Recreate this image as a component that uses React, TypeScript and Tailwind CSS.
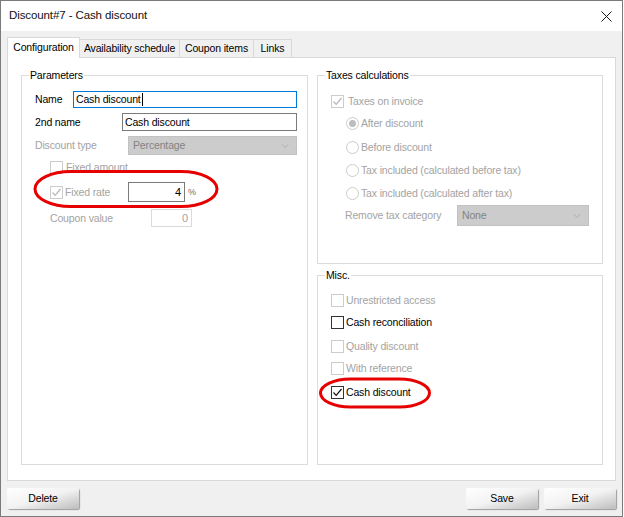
import { ChevronDown } from 'lucide-react';

const GRAY = 'text-[#a3a3a3]';

export default function App() {
  return (
    <div className="relative w-[623px] h-[517px] bg-[#f0f0f0] border border-[#7a7a7a] flex flex-col font-['Liberation_Sans',Arial,sans-serif] text-[10.5px] tracking-[-0.15px] text-black leading-none">
      {/* ── Title bar ─────────────────────────── */}
      <div className="h-[30px] shrink-0 bg-white flex items-center justify-between pl-[8px] pr-[9px]">
        <span className="text-[11.5px] tracking-[-0.1px] text-[#111]">Discount#7 - Cash discount</span>
        <svg width="11" height="11" viewBox="0 0 11 11" className="mr-[1px]">
          <path d="M0.5 0.5 L10.5 10.5 M10.5 0.5 L0.5 10.5" stroke="#1a1a1a" strokeWidth="1" fill="none" />
        </svg>
      </div>

      {/* ── Body ──────────────────────────────── */}
      <div className="flex flex-col px-[6px] pt-[6px]">
        {/* Tabs */}
        <div className="flex items-end h-[20px]">
          <div className="relative z-10 -mb-px h-[21px] w-[73px] bg-white border-x border-t border-[#d9d9d9] flex items-center justify-center pb-[1px]">
            Configuration
          </div>
          <Tab label="Availability schedule" w="w-[100px]" />
          <Tab label="Coupon items" w="w-[74px]" />
          <Tab label="Links" w="w-[38px]" />
        </div>

        {/* Panel */}
        <div className="h-[424px] bg-white border border-[#d9d9d9] pt-[17px] pl-[13px] pr-[9px]">
          <div className="grid grid-cols-[287px_286px] gap-x-[9px]">
            {/* Parameters */}
            <GroupBox label="Parameters" className="h-[390px] pt-[15px] pl-[13px] pr-[10px]">
              <div className="flex items-center h-[17px]">
                <span className="w-[38px]">Name</span>
                <div className="flex-1 h-full border border-[#0078d7] flex items-center pl-[2px]">
                  Cash discount<span className="w-px h-[13px] bg-black ml-px" />
                </div>
              </div>
              <div className="flex items-center h-[18px] mt-[5px]">
                <span className="w-[87px]">2nd name</span>
                <div className="flex-1 h-full border border-[#7a7a7a] flex items-center pl-[2px]">Cash discount</div>
              </div>
              <div className="flex items-center h-[19px] mt-[5px]">
                <span className={`w-[93px] ${GRAY}`}>Discount type</span>
                <Select value="Percentage" />
              </div>
              <div className="flex items-center h-[13px] mt-[6px] pl-[15px]">
                <Check disabled />
                <span className={`ml-[3px] ${GRAY}`}>Fixed amount</span>
              </div>
              <div className="flex items-center h-[20px] mt-[8px] pl-[15px]">
                <Check disabled checked />
                <span className={`ml-[2px] w-[63px] ${GRAY}`}>Fixed rate</span>
                <div className="w-[57px] h-full border border-[#7a7a7a] flex items-center justify-end pr-[3px] text-[11px]">4</div>
                <span className="ml-[3px] text-[9px] text-[#6d6d6d]">%</span>
              </div>
              <div className="flex items-center h-[18px] mt-[7px] pl-[15px]">
                <span className={`w-[101px] ${GRAY}`}>Coupon value</span>
                <div className={`w-[41px] h-full border border-[#dadada] flex items-center justify-end pr-[3px] text-[11px] ${GRAY}`}>0</div>
              </div>
            </GroupBox>

            <div className="flex flex-col gap-y-[11px]">
              {/* Taxes calculations */}
              <GroupBox label="Taxes calculations" className="h-[189px] pt-[19px] pl-[13px] pr-[13px]">
                <div className="flex items-center h-[13px]">
                  <Check disabled checked />
                  <span className={`ml-[4px] ${GRAY}`}>Taxes on invoice</span>
                </div>
                <RadioRow text="After discount" selected mt="mt-[9px]" />
                <RadioRow text="Before discount" mt="mt-[11px]" />
                <RadioRow text="Tax included (calculated before tax)" mt="mt-[10px]" />
                <RadioRow text="Tax included (calculated after tax)" mt="mt-[10px]" />
                <div className="flex items-center h-[21px] mt-[5px] pl-[14px]">
                  <span className={`w-[112px] ${GRAY}`}>Remove tax category</span>
                  <Select value="None" />
                </div>
              </GroupBox>

              {/* Misc. */}
              <GroupBox label="Misc." className="h-[190px] pt-[18px] pl-[13px]">
                <CheckRow text="Unrestricted access" disabled />
                <CheckRow text="Cash reconciliation" mt="mt-[9px]" />
                <CheckRow text="Quality discount" disabled mt="mt-[11px]" />
                <CheckRow text="With reference" disabled mt="mt-[9px]" />
                <CheckRow text="Cash discount" checked mt="mt-[11px]" />
              </GroupBox>
            </div>
          </div>
        </div>

        {/* ── Buttons ─────────────────────────── */}
        <div className="flex items-center justify-between mt-[7px]">
          <Button label="Delete" />
          <div className="flex gap-x-[6px]">
            <Button label="Save" />
            <Button label="Exit" />
          </div>
        </div>
      </div>

      {/* ── Red annotation marks ─────────────── */}
      <svg className="absolute inset-0 pointer-events-none" width="621" height="515" viewBox="1 1 621 515">
        <rect x="35" y="171.5" width="182" height="35" rx="36" ry="17.5" fill="none" stroke="#e60000" strokeWidth="3" />
        <rect x="320.5" y="379" width="109" height="28" rx="30" ry="14" fill="none" stroke="#e60000" strokeWidth="3" />
      </svg>
    </div>
  );
}

/* ── Helpers ────────────────────────────────────── */

function Tab({ label, w }: { label: string; w: string }) {
  return (
    <div className={`${w} h-[18px] bg-[#f0f0f0] border-r border-t border-[#d9d9d9] flex items-center justify-center`}>
      {label}
    </div>
  );
}

function GroupBox({ label, className, children }: { label: string; className: string; children: React.ReactNode }) {
  return (
    <div className={`relative border border-[#dcdcdc] ${className}`}>
      <span className="absolute -top-[7px] left-[7px] bg-white px-[1px] leading-[13px]">{label}</span>
      {children}
    </div>
  );
}

function Check({ checked = false, disabled = false }: { checked?: boolean; disabled?: boolean }) {
  return (
    <span
      className={`w-[13px] h-[13px] shrink-0 border bg-white flex items-center justify-center ${
        disabled ? 'border-[#cccccc]' : 'border-[#333333]'
      }`}
    >
      {checked && (
        <svg width="11" height="11" viewBox="0 0 11 11">
          <path
            d="M1.5 5.5 L4.2 8.3 L9.5 2"
            fill="none"
            stroke={disabled ? '#b5b5b5' : '#111'}
            strokeWidth="1.2"
          />
        </svg>
      )}
    </span>
  );
}

function CheckRow({ text, checked, disabled, mt = '' }: { text: string; checked?: boolean; disabled?: boolean; mt?: string }) {
  return (
    <div className={`flex items-center h-[13px] ${mt}`}>
      <Check checked={checked} disabled={disabled} />
      <span className={`ml-[2px] ${disabled ? GRAY : 'text-black'}`}>{text}</span>
    </div>
  );
}

function RadioRow({ text, selected, mt }: { text: string; selected?: boolean; mt: string }) {
  return (
    <div className={`flex items-center h-[13px] pl-[15px] ${mt}`}>
      <span className="w-[13px] h-[13px] shrink-0 rounded-full border border-[#cccccc] bg-white flex items-center justify-center">
        {selected && <span className="w-[7px] h-[7px] rounded-full bg-[#bdbdbd]" />}
      </span>
      <span className={`ml-[2px] ${GRAY}`}>{text}</span>
    </div>
  );
}

function Select({ value }: { value: string }) {
  return (
    <div className="flex-1 h-full bg-[#cccccc] border border-[#c2c2c2] flex items-center justify-between pl-[4px] pr-[5px] text-[#838383]">
      <span>{value}</span>
      <ChevronDown size={12} strokeWidth={1.2} className="text-[#9a9a9a]" />
    </div>
  );
}

function Button({ label }: { label: string }) {
  return (
    <button className="w-[72px] h-[21px] rounded-[2px] bg-gradient-to-br from-white via-[#f2f2f2] to-[#bdbdbd] shadow-[1px_1px_1px_rgba(0,0,0,0.35)] flex items-center justify-center text-black">
      {label}
    </button>
  );
}
